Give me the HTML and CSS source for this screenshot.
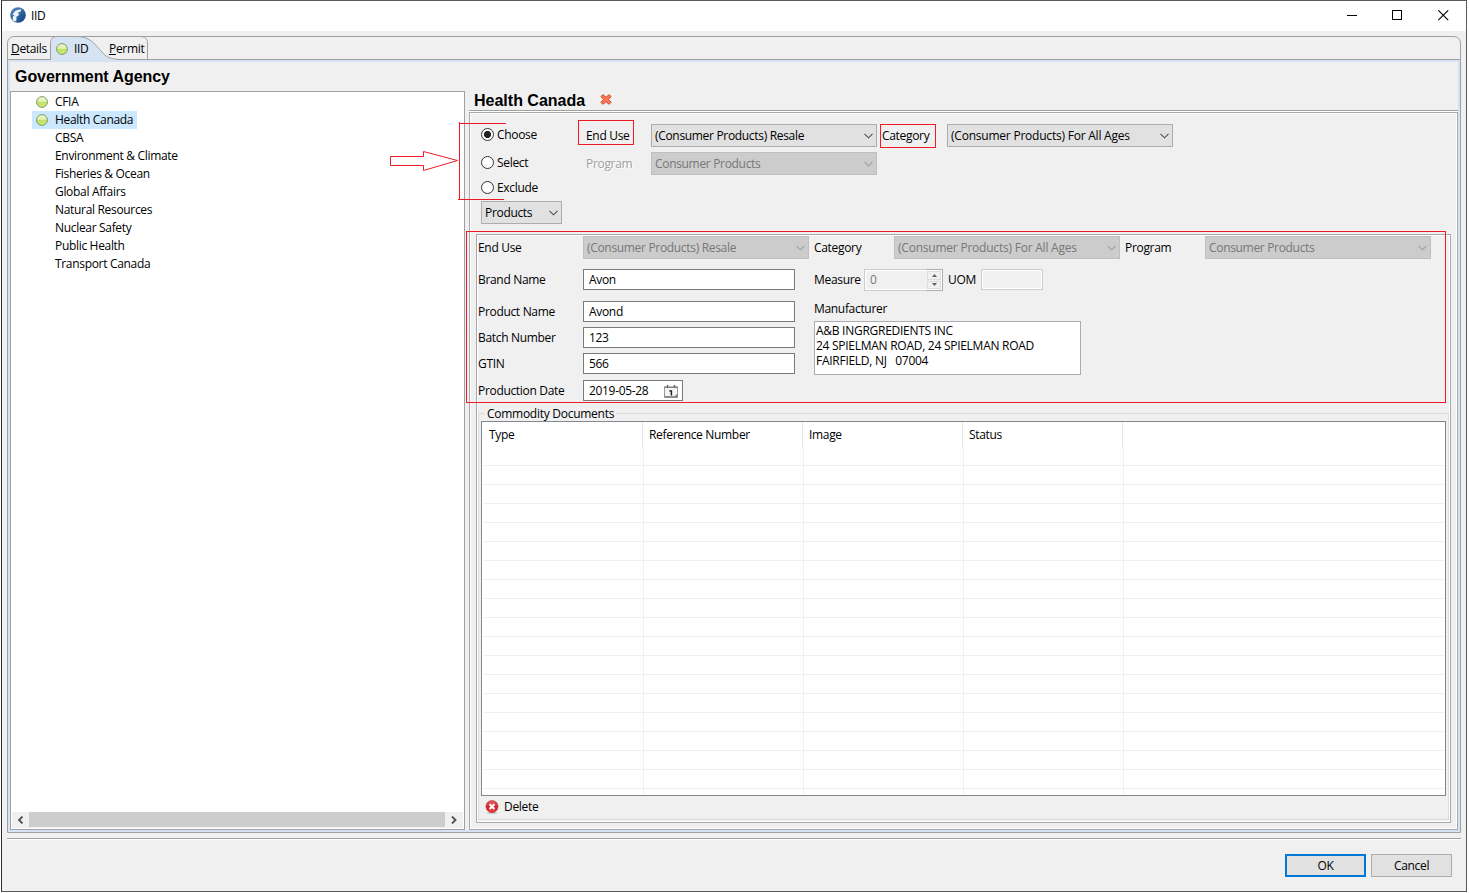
FILE: index.html
```
<!DOCTYPE html>
<html lang="en">
<head>
    <meta charset="UTF-8">
    <meta name="viewport" content="width=device-width, initial-scale=1.0">
    <title>IID</title>
    <link rel="stylesheet" href="styles.css">
</head>
<body>
    <!-- Shared icons -->
    <svg class="defs" width="0" height="0">
        <defs>
            <linearGradient id="green" x1="0" y1="0" x2="0" y2="1">
                <stop offset="0" stop-color="#eef7cf"/>
                <stop offset="0.45" stop-color="#e0f0b0"/>
                <stop offset="0.5" stop-color="#bfe065"/>
                <stop offset="1" stop-color="#cdea80"/>
            </linearGradient>
            <linearGradient id="blue" x1="0" y1="0" x2="1" y2="1">
                <stop offset="0" stop-color="#5b8fc4"/>
                <stop offset="1" stop-color="#0d3c7a"/>
            </linearGradient>
            <linearGradient id="red" x1="0" y1="0" x2="0" y2="1">
                <stop offset="0" stop-color="#e8686a"/>
                <stop offset="0.5" stop-color="#d41f26"/>
                <stop offset="1" stop-color="#f04040"/>
            </linearGradient>
            <symbol id="dot" viewBox="0 0 12 12">
                <circle cx="6" cy="6" r="5.4" fill="url(#green)" stroke="#7f9a62" stroke-width="1"/>
            </symbol>
            <symbol id="chevron" viewBox="0 0 9 6">
                <path d="M0.5 0.8 L4.5 4.8 L8.5 0.8" fill="none" stroke="currentColor" stroke-width="1.1"/>
            </symbol>
        </defs>
    </svg>

    <div class="window">
        <div class="titlebar">
            <svg class="app-icon" width="16" height="16" viewBox="0 0 16 16">
                <circle cx="8" cy="8" r="7.8" fill="url(#blue)"/>
                <path d="M2.6 13.4 L3 9.6 L4.6 8.6 L2.6 7.4 C4 4.4 6.6 2.4 11.2 2.2 L10.8 4.6 C9 4.8 8 5.6 7.6 6.8 L9.6 6.6 L8.2 8.8 L6.6 9.4 L6.2 14.4 Z" fill="#eef3f8"/>
            </svg>
            <span class="title">IID</span>
            <div class="controls">
                <svg width="11" height="11" viewBox="0 0 11 11"><path d="M1 5.5 H11" stroke="#000"/></svg>
                <svg width="11" height="11" viewBox="0 0 11 11"><rect x="0.5" y="0.5" width="9" height="9" fill="none" stroke="#000"/></svg>
                <svg width="11" height="11" viewBox="0 0 11 11"><path d="M0.3 0.3 L10.2 10.2 M10.2 0.3 L0.3 10.2" stroke="#000" stroke-width="1.1"/></svg>
            </div>
        </div>

        <div class="tabfolder">
            <div class="tabs">
                <svg class="tab-shape" width="150" height="24" viewBox="0 0 150 24">
                    <path d="M44 24 V7 C44 3 46 0.5 50 0.5 H70 C84 0.5 88 9 95 16 C99 21 102 22.5 110 23.5 V24 Z" fill="#d6e3f2"/>
                    <path d="M0 23.5 H43.5 V7 C43.5 3 46 0.5 50 0.5 H70 C84 0.5 88 9 95 16 C99 21 102 22.5 112 23.5 H150" fill="none" stroke="#a0a0a0"/>
                    <path d="M133 0.5 C138 0.5 140.5 3 140.5 7 V23" fill="none" stroke="#a0a0a0"/>
                </svg>
                <span class="tab tab-details"><u>D</u>etails</span>
                <span class="tab tab-iid"><svg width="12" height="12"><use href="#dot"/></svg>IID</span>
                <span class="tab tab-permit"><u>P</u>ermit</span>
            </div>

            <div class="page">
                <div class="agencies">
                    <h2>Government Agency</h2>
                    <div class="tree">
                        <ul>
                            <li><svg width="12" height="12"><use href="#dot"/></svg><span>CFIA</span></li>
                            <li class="selected"><svg width="12" height="12"><use href="#dot"/></svg><span>Health Canada</span></li>
                            <li class="plain"><span>CBSA</span></li>
                            <li class="plain"><span>Environment &amp; Climate</span></li>
                            <li class="plain"><span>Fisheries &amp; Ocean</span></li>
                            <li class="plain"><span>Global Affairs</span></li>
                            <li class="plain"><span>Natural Resources</span></li>
                            <li class="plain"><span>Nuclear Safety</span></li>
                            <li class="plain"><span>Public Health</span></li>
                            <li class="plain"><span>Transport Canada</span></li>
                        </ul>
                        <div class="scrollbar">
                            <span class="arrow"><svg width="6" height="8" viewBox="0 0 6 8"><path d="M4.5 0.5 L1 4 L4.5 7.5" fill="none" stroke="#505050" stroke-width="1.8"/></svg></span>
                            <span class="thumb"></span>
                            <span class="arrow right"><svg width="6" height="8" viewBox="0 0 6 8"><path d="M1 0.5 L4.5 4 L1 7.5" fill="none" stroke="#505050" stroke-width="1.8"/></svg></span>
                        </div>
                    </div>
                </div>

                <div class="detail">
                    <div class="detail-head">
                        <h2>Health Canada</h2>
                        <svg width="12" height="11" viewBox="0 0 12 11">
                            <path d="M3 0.7 L6 3.2 L9 0.7 L11.2 2.6 L8.3 5.4 L11.2 8.3 L9 10.3 L6 7.7 L3 10.3 L0.8 8.3 L3.7 5.4 L0.8 2.6 Z" fill="#f87858" stroke="#d83a20" stroke-width="0.9"/>
                        </svg>
                    </div>
                    <div class="panel">
                        <div class="mode">
                            <div class="radios">
                                <label class="radio"><i class="on"></i>Choose</label>
                                <label class="radio"><i></i>Select</label>
                                <label class="radio last"><i></i>Exclude</label>
                            </div>
                            <div class="filters">
                                <div class="filter-row">
                                    <span class="name">End Use</span>
                                    <div class="combo">(Consumer Products) Resale<svg width="9" height="6"><use href="#chevron"/></svg></div>
                                    <span class="category">Category</span>
                                    <div class="combo wide">(Consumer Products) For All Ages<svg width="9" height="6"><use href="#chevron"/></svg></div>
                                </div>
                                <div class="filter-row">
                                    <span class="name muted">Program</span>
                                    <div class="combo off">Consumer Products<svg width="9" height="6"><use href="#chevron"/></svg></div>
                                </div>
                            </div>
                        </div>
                        <div class="combo products">Products<svg width="9" height="6"><use href="#chevron"/></svg></div>

                        <div class="group">
                            <div class="form-top">
                                <span class="w105">End Use</span>
                                <div class="combo off">(Consumer Products) Resale<svg width="9" height="6"><use href="#chevron"/></svg></div>
                                <span class="w80">Category</span>
                                <div class="combo off wide">(Consumer Products) For All Ages<svg width="9" height="6"><use href="#chevron"/></svg></div>
                                <span class="w80">Program</span>
                                <div class="combo off">Consumer Products<svg width="9" height="6"><use href="#chevron"/></svg></div>
                            </div>
                            <div class="form-body">
                                <div class="fields">
                                    <div class="field brand"><span>Brand Name</span><div class="input">Avon</div></div>
                                    <div class="field"><span>Product Name</span><div class="input">Avond</div></div>
                                    <div class="field"><span>Batch Number</span><div class="input">123</div></div>
                                    <div class="field gtin"><span>GTIN</span><div class="input">566</div></div>
                                    <div class="field"><span>Production Date</span>
                                        <div class="input date">2019-05-28
                                            <svg width="15" height="13" viewBox="0 0 15 13">
                                                <rect x="0.5" y="2.5" width="13" height="9.5" fill="#f4f4f4" stroke="#9a9a9a"/>
                                                <path d="M0 2.2 H14" stroke="#888" stroke-width="1.6"/>
                                                <path d="M3.5 0 V3 M10.5 0 V3" stroke="#666" stroke-width="1.4"/>
                                                <path d="M0.5 12 H14" stroke="#666" stroke-width="1.2"/>
                                                <path d="M5.4 6 H7.4 V10.4" fill="none" stroke="#222" stroke-width="1.5"/>
                                                <path d="M9.5 12 L13.5 8.5 V12 Z" fill="#888"/>
                                            </svg>
                                        </div>
                                    </div>
                                </div>
                                <div class="maker">
                                    <div class="measure">
                                        <span class="m-label">Measure</span>
                                        <div class="spinner"><span>0</span>
                                            <div class="spin-buttons">
                                                <i><svg width="5" height="3" viewBox="0 0 5 3"><path d="M0 3 L2.5 0 L5 3 Z" fill="#606060"/></svg></i>
                                                <i><svg width="5" height="3" viewBox="0 0 5 3"><path d="M0 0 L2.5 3 L5 0 Z" fill="#606060"/></svg></i>
                                            </div>
                                        </div>
                                        <span class="u-label">UOM</span>
                                        <div class="uom"></div>
                                    </div>
                                    <div class="m-title">Manufacturer</div>
                                    <div class="address">A&amp;B INGRGREDIENTS INC<br>24 SPIELMAN ROAD, 24 SPIELMAN ROAD<br>FAIRFIELD, NJ&nbsp;&nbsp; 07004</div>
                                </div>
                            </div>

                            <fieldset class="documents">
                                <legend>Commodity Documents</legend>
                                <div class="table">
                                    <div class="thead"><span>Type</span><span>Reference Number</span><span>Image</span><span>Status</span></div>
                                    <div class="tbody"></div>
                                </div>
                                <div class="delete">
                                    <svg width="14" height="14" viewBox="0 0 14 14">
                                        <ellipse cx="7" cy="13" rx="5" ry="0.9" fill="#c8c8c8"/>
                                        <circle cx="7" cy="6.6" r="6" fill="url(#red)" stroke="#b5282c" stroke-width="0.7"/>
                                        <path d="M4.6 4.2 L9.4 9 M9.4 4.2 L4.6 9" stroke="#fff" stroke-width="2.3"/>
                                    </svg>
                                    <span>Delete</span>
                                </div>
                            </fieldset>
                        </div>
                    </div>
                </div>
            </div>
        </div>

        <div class="footer">
            <button class="ok">OK</button>
            <button>Cancel</button>
        </div>
    </div>

    <!-- Red markup drawn over the dialog -->
    <svg class="markup" width="1469" height="893" viewBox="0 0 1469 893">
        <g fill="none" stroke="#ed1c24">
            <path d="M390.5 156.5 H423.5 V151.5 L457.5 160.5 L423.5 170.5 V165.5 H390.5 Z"/>
            <path d="M459 123.5 H506 M459.5 122 V199 M458 199.5 H504"/>
            <rect x="578.5" y="120.5" width="55" height="24"/>
            <rect x="880.5" y="124.5" width="55" height="23"/>
            <rect x="466.5" y="231.5" width="979" height="171"/>
        </g>
    </svg>
</body>
</html>
```
FILE: styles.css
```
* {
    box-sizing: border-box;
}

body {
    margin: 0;
    width: 1469px;
    height: 893px;
    overflow: hidden;
    background-color: #fff;
    font-family: "Open Sans", "Noto Sans", sans-serif;
    font-size: 12px;
    letter-spacing: -0.32px;
    line-height: 16px;
    color: #000;
    white-space: nowrap;
}

svg {
    display: block;
    flex: none;
}

.defs {
    position: absolute;
}

.window {
    width: 1466px;
    height: 892px;
    margin-left: 1px;
    border: 1px solid #5a5a5c;
    border-left-color: #2c2c38;
    background-color: #f0f0f0;
    display: flex;
    flex-direction: column;
}

/* Title bar */
.titlebar {
    height: 30px;
    background-color: #fff;
    display: flex;
    align-items: center;
    padding: 0 17px 2px 8px;
}

.title {
    flex: 1;
    margin-left: 5px;
    padding-top: 1px;
}

.controls {
    display: flex;
    gap: 35px;
}

/* Tabs */
.tabfolder {
    width: 1454px;
    height: 797px;
    margin: 5px 0 0 5px;
    border: 1px solid #a0a0a0;
    border-radius: 7px 7px 0 0;
    display: flex;
    flex-direction: column;
}

.tabs {
    position: relative;
    height: 23px;
    display: flex;
    align-items: center;
    border-bottom: 1px solid #a0a0a0;
}

.tab-shape {
    position: absolute;
    left: -1px;
    top: -1px;
}

.tab {
    position: relative;
    padding-top: 2px;
}

.tab-details {
    width: 48px;
    padding-left: 3px;
}

.tab-iid {
    width: 53px;
    display: flex;
    align-items: center;
    gap: 6px;
}

.page {
    flex: 1;
    border: 2px solid #d6e3f2;
    display: flex;
    gap: 4px;
}

h2 {
    margin: 0;
    font-family: "Liberation Sans", Arial, sans-serif;
    font-size: 16px;
    line-height: 18px;
    letter-spacing: 0;
}

/* Agency list */
.agencies {
    width: 455px;
    display: flex;
    flex-direction: column;
}

.agencies h2 {
    height: 29px;
    padding: 6px 0 0 5px;
    letter-spacing: -0.06px;
}

.tree {
    flex: 1;
    border: 1px solid #a0a0a6;
    background-color: #fff;
    padding: 1px;
    display: flex;
    flex-direction: column;
    justify-content: space-between;
}

.tree ul {
    list-style: none;
    margin: 0;
    padding: 0 0 0 20px;
}

.tree li {
    width: max-content;
    height: 18px;
    display: flex;
    align-items: center;
    gap: 7px;
    padding: 0 4px;
}

.tree .plain {
    padding-left: 23px;
}

.tree .selected {
    background-color: #cce8ff;
}

.scrollbar {
    height: 16px;
    background-color: #f0f0f0;
    display: flex;
}

.arrow {
    width: 17px;
    display: flex;
    align-items: center;
    justify-content: center;
}

.arrow.right {
    width: 18px;
}

.thumb {
    flex: 1;
    height: 15px;
    background-color: #cdcdcd;
}

/* Right side */
.detail {
    flex: 1;
    display: flex;
    flex-direction: column;
}

.detail-head {
    height: 50px;
    border-bottom: 1px solid #fff;
    box-shadow: inset 0 -1px 0 #a0a0a0;
    display: flex;
    gap: 15px;
    padding: 30px 0 0 5px;
}

.detail-head svg {
    margin-top: 2px;
}

.panel {
    flex: 1;
    border: 1px solid #a8a8b0;
    box-shadow: inset 0 0 0 1px #fff;
    padding: 11px 6px 6px;
    display: flex;
    flex-direction: column;
}

.mode {
    display: flex;
    height: 77px;
    padding-left: 5px;
}

.radios {
    width: 105px;
    padding-top: 3px;
}

.radio {
    display: flex;
    align-items: center;
    height: 16px;
    gap: 3px;
    margin-bottom: 12px;
}

.radio:nth-child(2) {
    margin-bottom: 9px;
}

.radio i {
    width: 13px;
    height: 13px;
    margin-top: -1px;
    border: 1px solid #333;
    border-radius: 50%;
    background-color: #fff;
}

.radio .on {
    background: radial-gradient(circle, #222 3.2px, #fff 3.9px);
}

.filter-row {
    display: flex;
    align-items: center;
    margin-bottom: 5px;
}

.name {
    width: 65px;
}

.muted {
    color: #a0a0a0;
    text-shadow: 1px 1px 0 #fff;
}

.category {
    width: 70px;
    padding-left: 5px;
}

.combo {
    width: 226px;
    height: 23px;
    border: 1px solid #adadad;
    background-color: #e1e1e1;
    color: #000;
    display: flex;
    align-items: center;
    justify-content: space-between;
    padding: 0 3px 0 3px;
}

.combo.wide {
    letter-spacing: -0.22px;
}

.combo svg {
    color: #505050;
}

.combo.off {
    background-color: #cccccc;
    border-color: #bfbfbf;
    color: #777;
}

.combo.off svg {
    color: #a0a0a0;
}

.products {
    width: 81px;
    margin-left: 5px;
}

/* Commodity form */
.group {
    width: 975px;
    height: 589px;
    margin-top: 10px;
    border: 1px solid #a8a8b0;
    box-shadow: inset 0 0 0 1px #fff;
    padding: 1px;
    display: flex;
    flex-direction: column;
}

.form-top {
    display: flex;
    align-items: center;
}

.w105 {
    width: 105px;
}

.w80 {
    width: 85px;
    padding-left: 5px;
}

.form-body {
    display: flex;
    height: 148px;
    padding-top: 10px;
}

.fields {
    width: 336px;
}

.field {
    display: flex;
    align-items: center;
    margin-bottom: 5px;
}

.field > span {
    width: 105px;
}

.brand {
    margin-bottom: 11px;
}

.gtin {
    margin-bottom: 6px;
}

.input {
    width: 212px;
    height: 21px;
    border: 1px solid #7a7a7a;
    background-color: #fff;
    padding: 2px 0 0 5px;
}

.date {
    width: 100px;
    display: flex;
    justify-content: space-between;
    padding-right: 3px;
}

.date svg {
    margin-top: 2px;
}

.measure {
    display: flex;
    align-items: center;
    height: 22px;
}

.m-label {
    width: 50px;
}

.spinner {
    width: 79px;
    height: 22px;
    border: 1px solid #ccc;
    box-shadow: inset 0 0 0 1px #fff;
    color: #777;
    display: flex;
    justify-content: space-between;
}

.spinner > span {
    padding: 2px 0 0 5px;
}

.spin-buttons {
    width: 17px;
    margin: -1px -1px -1px 0;
    border: 1px solid #acacb2;
    border-left: 0;
    display: flex;
    flex-direction: column;
}

.spin-buttons i {
    flex: 1;
    margin: 1px;
    border: 1px solid #dcdcdc;
    display: flex;
    align-items: center;
    justify-content: center;
}

.spin-buttons i + i {
    margin-top: 0;
}

.u-label {
    width: 38px;
    padding-left: 5px;
}

.uom {
    width: 62px;
    height: 21px;
    border: 1px solid #ccc;
    box-shadow: inset 0 0 0 1px #fff;
    align-self: flex-start;
}

.m-title {
    margin-top: 10px;
}

.address {
    width: 267px;
    height: 54px;
    margin-top: 4px;
    border: 1px solid #abadb3;
    background-color: #fff;
    padding: 1px;
    line-height: 15px;
    letter-spacing: -0.27px;
}

/* Documents table */
.documents {
    position: relative;
    width: 971px;
    height: 407px;
    margin: 6px 0 0;
    border: 1px solid #dcdcdc;
    padding: 7px 2px 0;
}

.documents legend {
    position: absolute;
    left: 6px;
    top: -8px;
    padding: 0 2px;
    height: 15px;
    background-color: #f0f0f0;
    letter-spacing: -0.27px;
}

.table {
    width: 965px;
    height: 375px;
    border: 1px solid #828790;
    background-color: #fff;
}

.thead {
    height: 25px;
    display: flex;
}

.thead span {
    width: 160px;
    padding: 5px 0 0 6px;
    border-right: 1px solid #e5e5e5;
}

.thead span:first-child {
    width: 161px;
    padding-left: 7px;
}

.tbody {
    height: 347px;
    margin: 0 1px;
    background-image:
        repeating-linear-gradient(to bottom, transparent 0 18px, #f0f0f0 18px 19px),
        repeating-linear-gradient(to right, transparent 0 159px, #f0f0f0 159px 160px);
    background-size: 100% 100%, 641px 100%;
    background-position: 0 0, 1px 0;
    background-repeat: no-repeat;
}

.delete {
    display: flex;
    align-items: center;
    gap: 5px;
    padding: 3px 0 0 4px;
}

/* Footer */
.footer {
    flex: 1;
    width: 1454px;
    margin: 5px 0 0 5px;
    border-top: 1px solid #a0a0a0;
    box-shadow: inset 0 1px 0 #fff;
    display: flex;
    justify-content: flex-end;
    gap: 5px;
    padding: 15px 9px 0 0;
}

button {
    width: 81px;
    height: 23px;
    border: 1px solid #adadad;
    background-color: #e1e1e1;
    font: inherit;
    letter-spacing: inherit;
    padding: 0;
}

.ok {
    border: 2px solid #0078d7;
}

.markup {
    position: absolute;
    left: 0;
    top: 0;
    pointer-events: none;
}
```
